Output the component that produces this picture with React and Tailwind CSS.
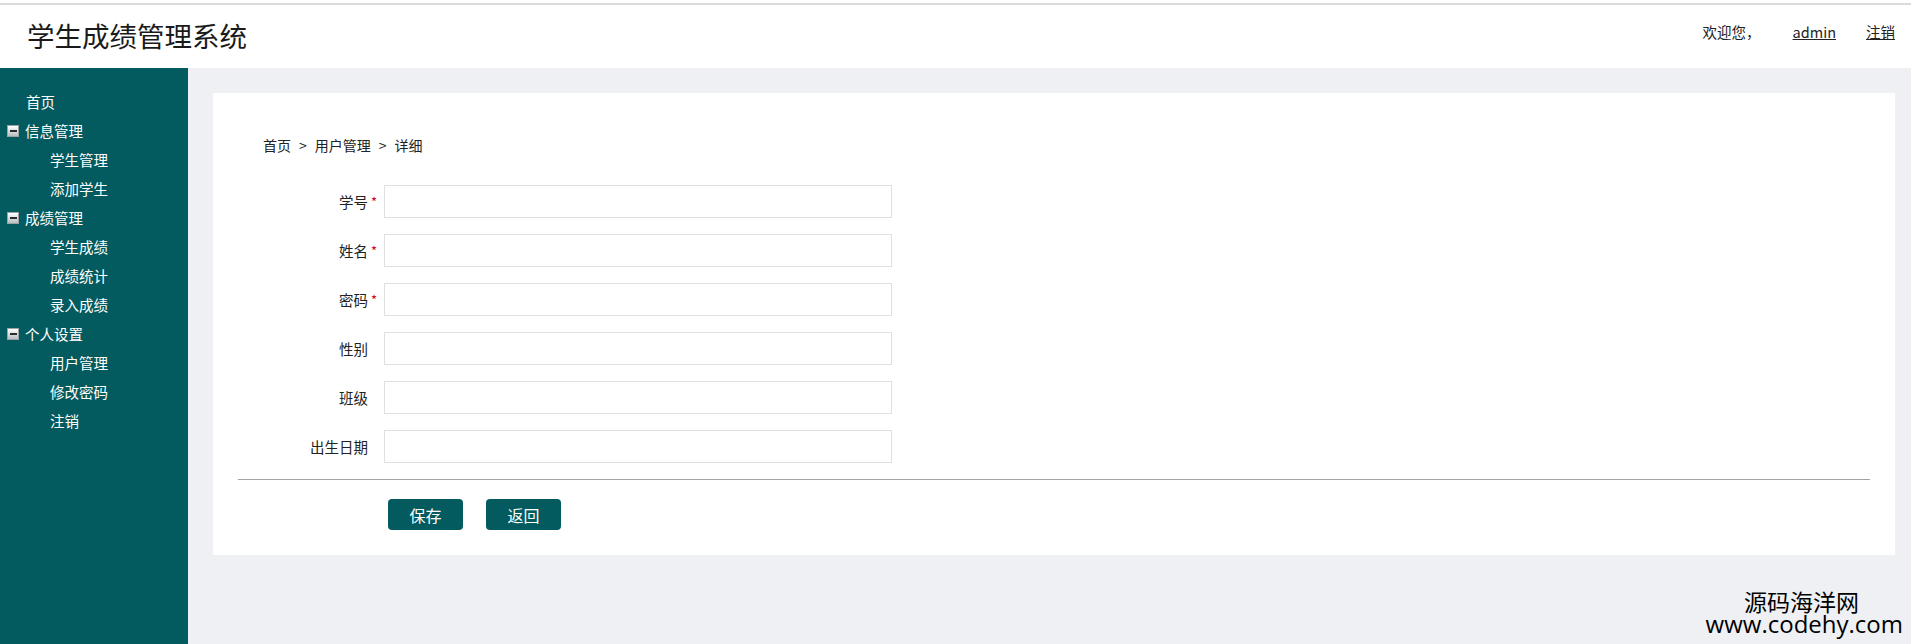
import React from "react";

const FONT = { fontFamily: '"Noto Sans CJK SC", "Microsoft YaHei", sans-serif' };

function MinusBox() {
  return (
    <span className="inline-flex w-[12px] h-[12px] items-center justify-center border border-[#9aa3a6] bg-gradient-to-b from-[#ffffff] to-[#b9c0c2] mr-[6px]">
      <span className="block w-[7px] h-[2px] bg-[#2b2b2b]" />
    </span>
  );
}

const menu = [
  { type: "top", label: "首页" },
  { type: "group", label: "信息管理" },
  { type: "sub", label: "学生管理" },
  { type: "sub", label: "添加学生" },
  { type: "group", label: "成绩管理" },
  { type: "sub", label: "学生成绩" },
  { type: "sub", label: "成绩统计" },
  { type: "sub", label: "录入成绩" },
  { type: "group", label: "个人设置" },
  { type: "sub", label: "用户管理" },
  { type: "sub", label: "修改密码" },
  { type: "sub", label: "注销" },
];

const fields = [
  { label: "学号", req: true },
  { label: "姓名", req: true },
  { label: "密码", req: true },
  { label: "性别", req: false },
  { label: "班级", req: false },
  { label: "出生日期", req: false },
];

export default function App() {
  return (
    <div className="relative w-full h-[644px] overflow-hidden bg-white flex flex-col text-[#222]" style={FONT}>
      {/* header */}
      <div className="pt-[3px]">
        <div className="h-[2px] bg-[#d9d9d9]" />
        <div className="h-[63px] flex items-center justify-between pl-[27px] pr-[16px]">
          <div className="text-[27.5px] leading-none text-[#1a1a1a] -mt-[2px]">学生成绩管理系统</div>
          <div className="flex items-center text-[14.5px] text-[#222] -mt-[9px]">
            <span>欢迎您，</span>
            <a className="underline ml-[32px]">admin</a>
            <a className="underline ml-[30px]">注销</a>
          </div>
        </div>
      </div>

      {/* body */}
      <div className="flex flex-1 min-h-0">
        <aside className="w-[188px] shrink-0 bg-[#035b5f] pt-[19px] text-white text-[14.5px]">
          {menu.map((m, i) => (
            <div
              key={i}
              className={
                "h-[29px] flex items-center " +
                (m.type === "top" ? "pl-[26px]" : m.type === "group" ? "pl-[7px]" : "pl-[50px]")
              }
            >
              {m.type === "group" && <MinusBox />}
              <span>{m.label}</span>
            </div>
          ))}
        </aside>

        <main className="flex-1 bg-[#eff0f4] pt-[25px] pl-[25px] pr-[16px]">
          <div className="bg-white pb-[25px]">
            <div className="pl-[50px] pt-[42px] text-[14px] leading-[20px] text-[#222] flex gap-[8px]">
              <span>首页</span>
              <span>&gt;</span>
              <span>用户管理</span>
              <span>&gt;</span>
              <span>详细</span>
            </div>
            <div className="mt-[30px] flex flex-col gap-[16px]">
              {fields.map((f) => (
                <div key={f.label} className="flex items-center h-[33px] text-[14.5px]">
                  <div className="w-[155px] text-right text-[#222]">{f.label}</div>
                  <div className="w-[16px] pl-[3px] text-[#d0021b] text-[13px]">{f.req ? "*" : ""}</div>
                  <input
                    type="text"
                    className="w-[508px] h-[33px] border border-[#e0e0e0] bg-white outline-none px-2"
                  />
                </div>
              ))}
            </div>
            <div className="mx-[25px] mt-[16px] h-[1px] bg-[#a3a3a3]" />
            <div className="mt-[19px] pl-[175px] flex gap-[23px]">
              <button className="w-[75px] h-[31px] rounded-[4px] bg-[#035b5f] text-white text-[16px]">保存</button>
              <button className="w-[75px] h-[31px] rounded-[4px] bg-[#035b5f] text-white text-[16px]">返回</button>
            </div>
          </div>
        </main>
      </div>

      {/* watermark */}
      <div className="absolute right-[8px] bottom-[9px] flex flex-col items-end text-black">
        <div className="text-[23px] leading-[23px] mr-[44px]">源码海洋网</div>
        <div className="text-[24px] leading-[22px]" style={{ fontFamily: '"Open Sans", sans-serif' }}>www.codehy.com</div>
      </div>
    </div>
  );
}
